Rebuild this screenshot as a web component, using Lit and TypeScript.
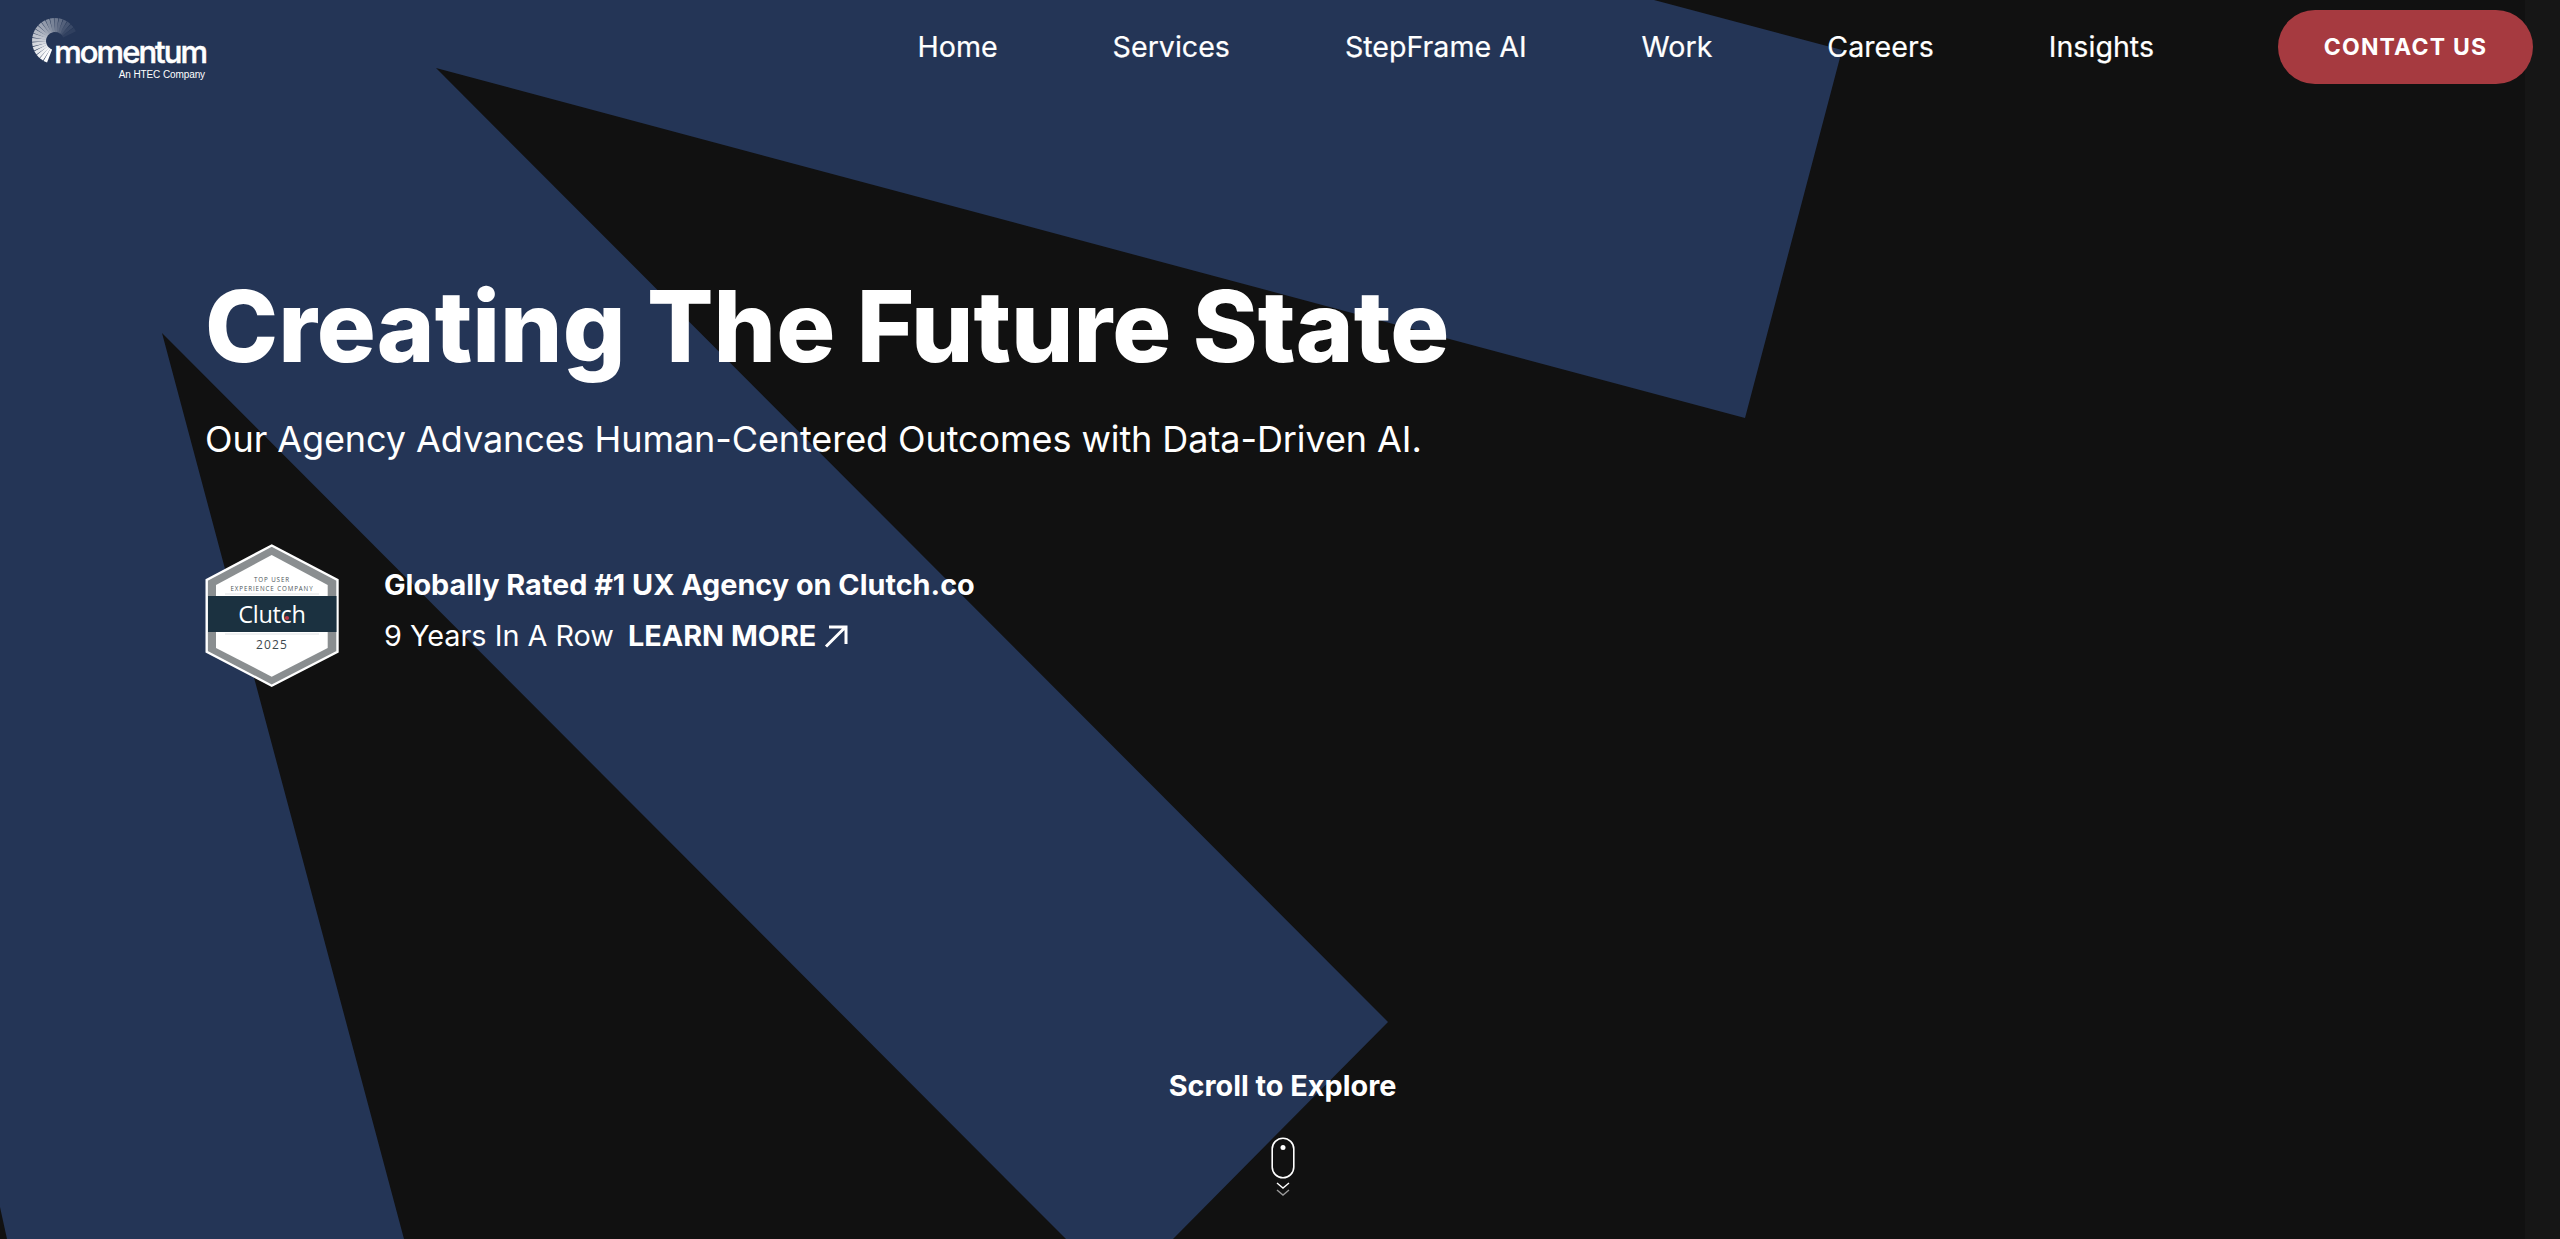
import { LitElement, html, css, svg } from "lit";
import { customElement } from "lit/decorators.js";

const rays = () => {
  const out = [];
  const n = 20;
  const cx = 23, cy = 23, r0 = 9, r1 = 23;
  for (let i = 0; i < n; i++) {
    const deg = 205 + (i * 215) / (n - 1);
    const a = (deg * Math.PI) / 180;
    const w0 = 0.085, w1 = 0.085;
    const p = (r: number, d: number) => `${(cx + Math.sin(a + d) * r).toFixed(2)},${(cy - Math.cos(a + d) * r).toFixed(2)}`;
    const op = Math.max(0.06, 1 - Math.pow(i / (n - 1), 1.2) * 0.96);
    out.push(svg`<polygon points="${p(r0, -w0 * 1.3)} ${p(r1, -w1)} ${p(r1, w1)} ${p(r0, w0 * 1.3)}" fill="#fff" fill-opacity=${op}></polygon>`);
  }
  return out;
};

@customElement("app-root")
export class AppRoot extends LitElement {
  static styles = css`
    :host { display: block; }
    .page {
      position: relative; width: 2560px; height: 1239px; overflow: hidden;
      background: #111111; color: #fff;
      font-family: Inter, "Liberation Sans", sans-serif;
      display: flex; flex-direction: column;
    }
    .bg { position: absolute; inset: 0; width: 2560px; height: 1239px; }
    .strip { position: absolute; top: 0; right: 0; bottom: 0; width: 35px; background: #161616; }
    header, main { position: relative; }
    header {
      display: flex; align-items: flex-start; justify-content: space-between;
      padding: 10px 27px 0 30px; height: 84px; box-sizing: border-box;
    }
    .logo { display: grid; width: 180px; padding-top: 8px; }
    .logo > * { grid-area: 1 / 1; }
    .sun { width: 46px; height: 46px; margin-left: 2px; }
    .wordmark { padding-top: 19px; display: flex; flex-direction: column; align-items: flex-end; width: 176px; }
    .wm { font: 500 31px/30px Inter, sans-serif; letter-spacing: -1.95px; white-space: nowrap; -webkit-text-stroke: 0.5px #fff; }
    .sub { font: 400 10px/12px "Liberation Sans", sans-serif; margin-top: 2px; margin-right: 1px; letter-spacing: -0.1px; }
    nav { display: flex; align-items: center; gap: 115px; margin-left: auto; height: 74px; }
    nav a { font-size: 28.6px; font-weight: 400; line-height: 34px; white-space: nowrap; -webkit-text-stroke: 0.2px #fff; }
    .cta {
      margin-left: 124px; width: 255px; height: 74px; border-radius: 37px; background: #a63a40;
      display: flex; align-items: center; justify-content: center;
      font-size: 23px; font-weight: 700; letter-spacing: 1.2px; white-space: nowrap;
    }
    main { padding: 183px 0 0 205px; flex: 1; }
    h1 { margin: 0; font-size: 98.4px; line-height: 120px; font-weight: 800; white-space: nowrap; }
    .lead { margin-top: 30px; font-size: 36px; line-height: 44px; letter-spacing: -0.08px; white-space: nowrap; }
    .rated { display: flex; align-items: center; gap: 45px; margin-top: 83px; }
    .badge { width: 134px; height: 144px; flex: none; display: block; }
    .copy { padding-bottom: 11px; }
    .rated p { margin: 0; font-size: 28.8px; line-height: 50.5px; white-space: nowrap; }
    .rated b { font-weight: 700; }
    .row { display: flex; align-items: center; gap: 14px; }
    .row svg { width: 24px; height: 24px; margin-left: -6px; }
    .scroll {
      position: absolute; left: 5px; right: 0; top: 1066px;
      display: flex; flex-direction: column; align-items: center;
    }
    .scroll span { font-size: 28.8px; font-weight: 700; line-height: 40px; }
    .mouse { margin-top: 31px; width: 24px; height: 42px; display: block; }
    .chev { margin-top: 3px; width: 16px; height: 16px; display: block; }
  `;

  render() {
    return html`
      <div class="page">
        <svg class="bg" viewBox="0 0 2560 1239" aria-hidden="true">
          <polygon fill="#243556" points="0,0 1654,0 1842,50 1745,418 436,68 1388,1022 1173,1239 1066,1239 162,333 404,1239 7,1239 0,1207"></polygon>
        </svg>
        <div class="strip"></div>
        <header>
          <div class="logo">
            <svg class="sun" viewBox="0 0 46 46" aria-hidden="true">${rays()}</svg>
            <div class="wordmark">
              <div class="wm">momentum</div>
              <div class="sub">An HTEC Company</div>
            </div>
          </div>
          <nav>
            <a>Home</a><a>Services</a><a>StepFrame AI</a><a>Work</a><a>Careers</a><a>Insights</a>
          </nav>
          <div class="cta">CONTACT US</div>
        </header>
        <main>
          <h1>Creating The Future State</h1>
          <div class="lead">Our Agency Advances Human-Centered Outcomes with Data-Driven AI.</div>
          <div class="rated">
            <svg class="badge" viewBox="0 0 134 144" aria-label="Clutch badge">
              <polygon points="66.7,1.5 132.5,36 132.5,107.7 66.7,141.7 1.7,107.7 1.7,36" fill="#8a8e90" stroke="#fff" stroke-width="2.4"></polygon>
              <polygon points="66.7,11 122.7,41 122.7,104 66.7,132.7 11,104 11,41" fill="#fff"></polygon>
              <rect x="3" y="52" width="128.5" height="36" fill="#1b3140"></rect>
              <line x1="20" x2="114" y1="50" y2="50" stroke="#d5d8da" stroke-width="0.8"></line>
              <line x1="20" x2="114" y1="90" y2="90" stroke="#d5d8da" stroke-width="0.8"></line>
              <text x="67" y="37.5" text-anchor="middle" font-family="'Open Sans', sans-serif" font-size="6.2" letter-spacing="0.9" fill="#4a5358">TOP USER</text>
              <text x="67" y="46.5" text-anchor="middle" font-family="'Open Sans', sans-serif" font-size="6.2" letter-spacing="0.9" fill="#4a5358">EXPERIENCE COMPANY</text>
              <text x="67" y="79" text-anchor="middle" font-family="'Open Sans', sans-serif" font-size="23.5" font-weight="500" letter-spacing="-0.3" fill="#fff">Clutch</text>
              <circle cx="82" cy="74" r="2.1" fill="#c23a4a"></circle>
              <text x="67" y="105" text-anchor="middle" font-family="'Open Sans', sans-serif" font-size="12" letter-spacing="1.2" fill="#3c484e">2025</text>
            </svg>
            <div class="copy">
              <p><b>Globally Rated #1 UX Agency on Clutch.co</b></p>
              <p class="row">
                <span>9 Years In A Row</span><b>LEARN MORE</b>
                <svg viewBox="0 0 24 24" fill="none" stroke="#fff" stroke-width="3" aria-hidden="true">
                  <path d="M2 22.5 L21 3.5 M5 3 H22 V20"></path>
                </svg>
              </p>
            </div>
          </div>
        </main>
        <div class="scroll">
          <span>Scroll to Explore</span>
          <svg class="mouse" viewBox="0 0 24 42" aria-hidden="true">
            <rect x="1.2" y="1.2" width="21.6" height="39.6" rx="10.8" fill="none" stroke="#fff" stroke-width="1.6"></rect>
            <circle cx="12" cy="10.5" r="2.5" fill="#fff"></circle>
          </svg>
          <svg class="chev" viewBox="0 0 16 16" fill="none" aria-hidden="true">
            <path d="M2 1 L8 6 L14 1" stroke="#fff" stroke-width="1.4"></path>
            <path d="M2 8 L8 13 L14 8" stroke="#9a9a9a" stroke-width="1.4"></path>
          </svg>
        </div>
      </div>
    `;
  }
}
